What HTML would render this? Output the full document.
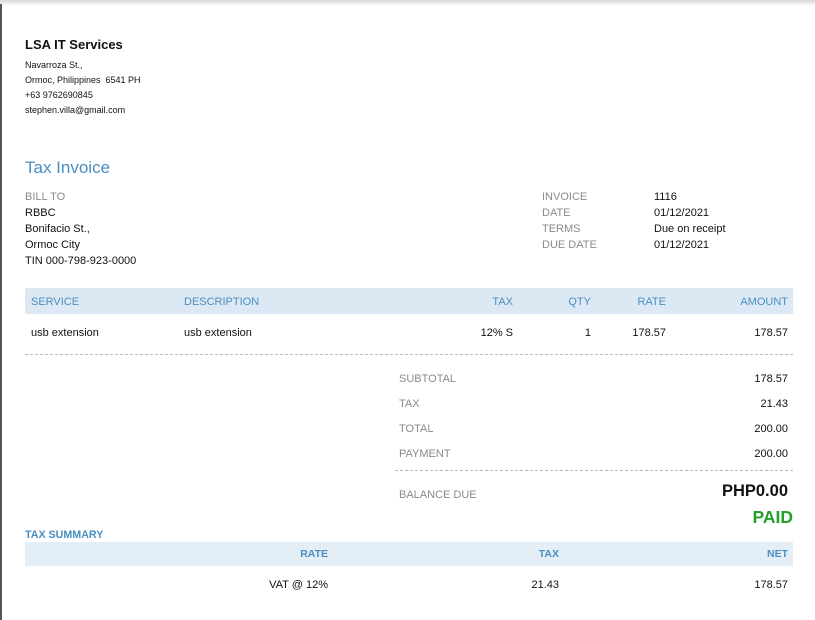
<!DOCTYPE html>
<html><head><meta charset="utf-8"><style>
*{margin:0;padding:0;box-sizing:border-box}
body{width:815px;height:620px;overflow:hidden;background:#fff;font-family:"Liberation Sans",Arial,sans-serif;color:#111;position:relative}
.a{position:absolute;white-space:nowrap;line-height:16px;font-size:11px}
.g{color:#8a8a8a}
.b{color:#4a8fc0}
.r{text-align:right}
.s{font-size:9px;line-height:12px}
.band{position:absolute;background:#dce9f4}
.dash{position:absolute;border-top:1px dashed #bbb;height:0}
</style></head><body>
<div style="position:absolute;left:0;top:0;width:815px;height:6px;background:linear-gradient(#d8d8d8,#fff)"></div>
<div style="position:absolute;left:0;top:4px;width:2px;height:616px;background:#555"></div>

<div class="a" style="left:25px;top:37px;font-size:13px;font-weight:bold">LSA IT Services</div>
<div class="a s" style="left:25px;top:59px">Navarroza St.,</div>
<div class="a s" style="left:25px;top:74px">Ormoc, Philippines&nbsp; 6541 PH</div>
<div class="a s" style="left:25px;top:89px">+63 9762690845</div>
<div class="a s" style="left:25px;top:104px">stephen.villa@gmail.com</div>

<div class="a b" style="left:25px;top:158px;font-size:17px;line-height:20px">Tax Invoice</div>
<div class="a g" style="left:25px;top:189px">BILL TO</div>
<div class="a" style="left:25px;top:205px">RBBC</div>
<div class="a" style="left:25px;top:221px">Bonifacio St.,</div>
<div class="a" style="left:25px;top:237px">Ormoc City</div>
<div class="a" style="left:25px;top:253px">TIN 000-798-923-0000</div>

<div class="a g" style="left:542px;top:189px">INVOICE</div>
<div class="a g" style="left:542px;top:205px">DATE</div>
<div class="a g" style="left:542px;top:221px">TERMS</div>
<div class="a g" style="left:542px;top:237px">DUE DATE</div>
<div class="a" style="left:654px;top:189px">1116</div>
<div class="a" style="left:654px;top:205px">01/12/2021</div>
<div class="a" style="left:654px;top:221px">Due on receipt</div>
<div class="a" style="left:654px;top:237px">01/12/2021</div>

<div class="band" style="left:25px;top:288px;width:768px;height:26px"></div>
<div class="a b" style="left:31px;top:294px">SERVICE</div>
<div class="a b" style="left:184px;top:294px">DESCRIPTION</div>
<div class="a b r" style="right:302px;top:294px">TAX</div>
<div class="a b r" style="right:224px;top:294px">QTY</div>
<div class="a b r" style="right:149px;top:294px">RATE</div>
<div class="a b r" style="right:27px;top:294px">AMOUNT</div>

<div class="a" style="left:31px;top:325px">usb extension</div>
<div class="a" style="left:184px;top:325px">usb extension</div>
<div class="a r" style="right:302px;top:325px">12% S</div>
<div class="a r" style="right:224px;top:325px">1</div>
<div class="a r" style="right:149px;top:325px">178.57</div>
<div class="a r" style="right:27px;top:325px">178.57</div>
<div class="dash" style="left:25px;top:354px;width:768px"></div>

<div class="a g" style="left:399px;top:371px">SUBTOTAL</div>
<div class="a g" style="left:399px;top:396px">TAX</div>
<div class="a g" style="left:399px;top:421px">TOTAL</div>
<div class="a g" style="left:399px;top:446px">PAYMENT</div>
<div class="a r" style="right:27px;top:371px">178.57</div>
<div class="a r" style="right:27px;top:396px">21.43</div>
<div class="a r" style="right:27px;top:421px">200.00</div>
<div class="a r" style="right:27px;top:446px">200.00</div>
<div class="dash" style="left:395px;top:470px;width:398px"></div>
<div class="a g" style="left:399px;top:487px">BALANCE DUE</div>
<div class="a r" style="right:27px;top:481px;font-size:16.5px;line-height:20px;font-weight:bold">PHP0.00</div>
<div class="a r" style="right:22px;top:507px;font-size:17.5px;line-height:20px;font-weight:bold;color:#22a02a">PAID</div>

<div class="a b" style="left:25px;top:527px;font-size:10.7px;font-weight:bold">TAX SUMMARY</div>
<div class="band" style="left:25px;top:542px;width:768px;height:24px;background:#e4eef7"></div>
<div class="a b r" style="right:487px;top:546px;font-size:10.5px;font-weight:bold">RATE</div>
<div class="a b r" style="right:256px;top:546px;font-size:10.5px;font-weight:bold">TAX</div>
<div class="a b r" style="right:27px;top:546px;font-size:10.5px;font-weight:bold">NET</div>
<div class="a r" style="right:487px;top:577px">VAT @ 12%</div>
<div class="a r" style="right:256px;top:577px">21.43</div>
<div class="a r" style="right:27px;top:577px">178.57</div>
</body></html>
